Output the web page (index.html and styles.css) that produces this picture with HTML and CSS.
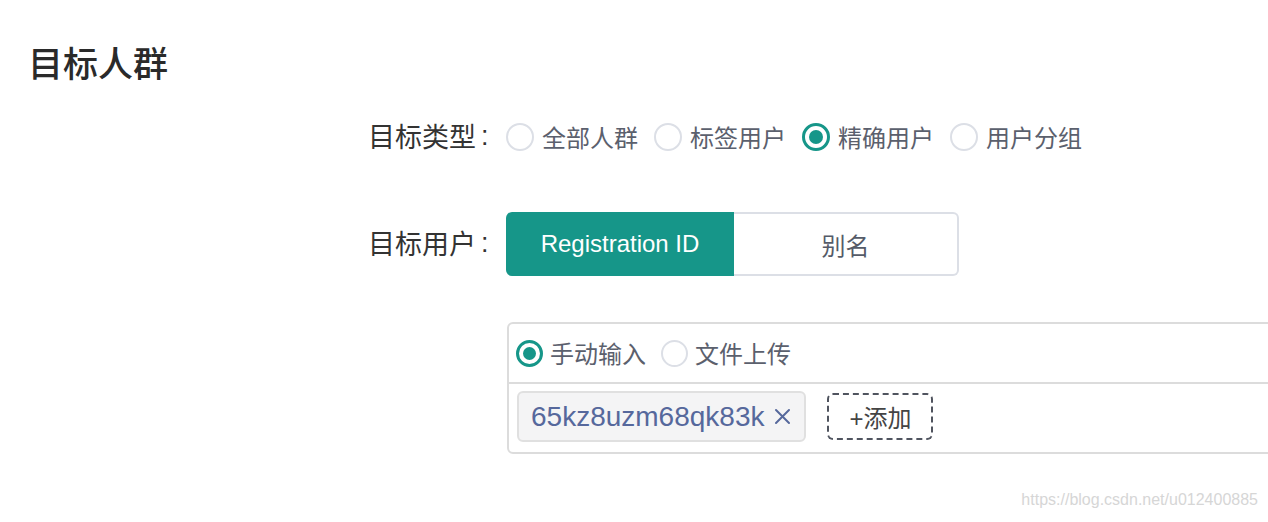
FILE: index.html
```html
<!DOCTYPE html>
<html lang="zh-CN">
<head>
<meta charset="utf-8">
<title>目标人群</title>
<link rel="stylesheet" href="styles.css">
</head>
<body>
  <h1 class="title">目标人群</h1>
  <div class="form">
    <div class="row row-type">
      <div class="label">目标类型<span class="colon">:</span></div>
      <div class="radio-group">
        <label class="radio-item"><span class="radio"></span><span>全部人群</span></label>
        <label class="radio-item"><span class="radio"></span><span>标签用户</span></label>
        <label class="radio-item"><span class="radio checked"></span><span>精确用户</span></label>
        <label class="radio-item"><span class="radio"></span><span>用户分组</span></label>
      </div>
    </div>
    <div class="row row-user">
      <div class="label">目标用户<span class="colon">:</span></div>
      <div class="seg">
        <div class="seg-btn active">Registration ID</div>
        <div class="seg-btn plain">别名</div>
      </div>
    </div>
    <div class="box">
      <div class="box-head">
        <div class="radio-group small">
          <label class="radio-item"><span class="radio checked"></span><span>手动输入</span></label>
          <label class="radio-item"><span class="radio"></span><span>文件上传</span></label>
        </div>
      </div>
      <div class="box-body">
        <div class="tag">
          <span class="tag-text">65kz8uzm68qk83k</span>
          <svg class="tag-close" width="17" height="17" viewBox="0 0 17 17"><path d="M2 2 L15 15 M15 2 L2 15" stroke="#56689c" stroke-width="2" fill="none" stroke-linecap="round"/></svg>
        </div>
        <div class="add-btn">+添加</div>
      </div>
    </div>
  </div>
  <div class="watermark">https://blog.csdn.net/u012400885</div>
</body>
</html>
```
FILE: styles.css
```css
html, body {
  margin: 0;
  overflow: hidden;
}
body {
  width: 1268px;
  height: 522px;
  position: relative;
  background: #fff;
  color: #333;
  font-family: "Liberation Sans", "Noto Sans CJK SC", sans-serif;
}
.title {
  margin: 0;
  padding: 44px 0 0 28px;
  font-size: 35px;
  line-height: 35px;
  font-weight: 500;
  color: #2a2a2a;
  font-family: "Noto Sans CJK SC", sans-serif;
}
.form {
  padding-left: 368px;
}
.row {
  display: flex;
  align-items: center;
}
.row-type {
  margin-top: 34px;
  height: 48px;
}
.row-user {
  margin-top: 51px;
  height: 64px;
}
.label {
  width: 138px;
  flex-shrink: 0;
  display: flex;
  align-items: center;
  font-size: 27px;
  line-height: 34px;
  margin-top: -3px;
  color: #333;
  font-family: "Noto Sans CJK SC", sans-serif;
}
.colon {
  margin-left: 5px;
  font-family: "Liberation Sans", sans-serif;
}
.radio-group {
  display: flex;
  gap: 16px;
}
.radio-item {
  display: flex;
  align-items: center;
  gap: 8px;
  font-size: 24px;
  line-height: 32px;
  color: #5b606d;
  font-family: "Noto Sans CJK SC", sans-serif;
}
.radio {
  width: 28px;
  height: 28px;
  box-sizing: border-box;
  border: 2px solid #dcdfe6;
  border-radius: 50%;
  display: flex;
  align-items: center;
  justify-content: center;
  background: #fff;
}
.radio.checked {
  border: 3px solid #169689;
}
.radio.checked::after {
  content: "";
  width: 14px;
  height: 14px;
  border-radius: 50%;
  background: #169689;
}
.radio-group.small {
  gap: 15px;
}
.radio-group.small .radio-item {
  gap: 7px;
}
.radio-group.small .radio {
  width: 27px;
  height: 27px;
}
.radio-group.small .radio.checked::after {
  width: 13px;
  height: 13px;
}
.seg {
  display: flex;
}
.seg-btn {
  height: 64px;
  box-sizing: border-box;
  display: flex;
  align-items: center;
  justify-content: center;
  font-size: 24px;
}
.seg-btn.active {
  width: 228px;
  background: #169689;
  color: #fff;
  border-radius: 6px 0 0 6px;
}
.seg-btn.plain {
  width: 225px;
  border: 2px solid #dcdfe6;
  border-left: none;
  border-radius: 0 6px 6px 0;
  color: #555b68;
  font-family: "Noto Sans CJK SC", sans-serif;
}
.box {
  margin-top: 46px;
  margin-left: 139px;
  width: 820px;
  border: 2px solid #dcdcdc;
  border-radius: 6px;
}
.box-head {
  height: 58px;
  border-bottom: 2px solid #dcdcdc;
  display: flex;
  align-items: center;
  padding-left: 7px;
}
.box-body {
  height: 68px;
  box-sizing: border-box;
  padding: 0 0 3px 8px;
  display: flex;
  align-items: center;
  gap: 21px;
}
.tag {
  height: 51px;
  box-sizing: border-box;
  border: 2px solid #e0e0e0;
  border-radius: 6px;
  background: #f4f4f5;
  padding: 0 13px 0 12px;
  display: flex;
  align-items: center;
  gap: 10px;
  font-size: 28px;
  color: #56689c;
}
.add-btn {
  width: 106px;
  height: 47px;
  box-sizing: border-box;
  border: 2px dashed #50545f;
  border-radius: 6px;
  display: flex;
  align-items: center;
  justify-content: center;
  font-size: 24px;
  color: #444;
  font-family: "Liberation Sans", "Noto Sans CJK SC", sans-serif;
}
.watermark {
  position: absolute;
  right: 10px;
  top: 491px;
  font-size: 16px;
  color: #d6d6d6;
}
```
